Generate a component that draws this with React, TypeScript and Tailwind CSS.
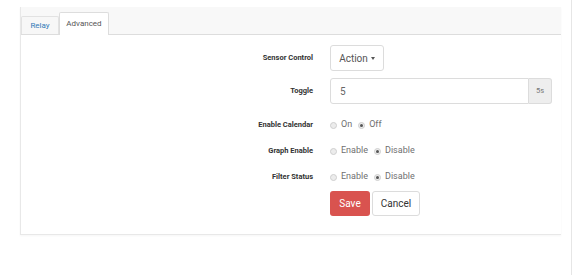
import React from "react";

function Radio({ checked }: { checked?: boolean }) {
  return (
    <span className="inline-flex items-center justify-center w-[7px] h-[7px] rounded-full border border-[#cfcfcf] bg-[#ececec]">
      {checked ? <span className="w-[3px] h-[3px] rounded-full bg-[#555]" /> : null}
    </span>
  );
}

function RadioPair({ a, b }: { a: string; b: string }) {
  return (
    <div className="flex items-center text-[9px] text-[#707070]">
      <Radio />
      <span className="ml-[4px]">{a}</span>
      <span className="ml-[6px] flex items-center"><Radio checked /></span>
      <span className="ml-[4px]">{b}</span>
    </div>
  );
}

function Label({ children }: { children: React.ReactNode }) {
  return (
    <div className="w-[292px] text-right text-[7.5px] font-bold text-[#333]">{children}</div>
  );
}

export default function App() {
  return (
    <div
      className="w-[572px] h-[275px] bg-white relative overflow-hidden"
      style={{ fontFamily: "Roboto, 'Liberation Sans', sans-serif" }}
    >
      <div className="absolute right-0 top-0 h-full w-[1px] bg-[#e6e6e6]" />
      <div className="ml-[20px] mt-[7px] w-[541px] h-[228px] border-l border-b border-[#e8e8e8] shadow-[0_1px_2px_rgba(0,0,0,0.04)]">
        <div className="h-[28px] bg-[#f8f8f8] border-b border-[#dddddd] flex items-end">
          <div className="w-[38px] h-[18px] border border-b-0 border-[#e2e2e2] bg-[#f7f7f7] flex items-center justify-center text-[8px] text-[#337ab7] rounded-t-[2px]">
            Relay
          </div>
          <div className="w-[50px] h-[23px] -mb-[1px] border border-b-0 border-[#dddddd] bg-white flex items-center justify-center text-[8px] text-[#555] rounded-t-[2px]">
            Advanced
          </div>
        </div>
        <div className="flex flex-col pt-[10px]">
          <div className="flex items-center h-[26px]">
            <Label>Sensor Control</Label>
            <div className="ml-[17px] h-[26px] w-[54px] border border-[#dcdcdc] rounded-[3px] flex items-center justify-center text-[10px] text-[#555]">
              Action
              <span className="ml-[3px] inline-block w-0 h-0 border-l-[2.5px] border-r-[2.5px] border-t-[3px] border-l-transparent border-r-transparent border-t-[#555]" />
            </div>
          </div>
          <div className="flex items-center h-[26px] mt-[7px]">
            <Label>Toggle</Label>
            <div className="ml-[17px] flex h-[26px]">
              <div className="w-[199px] h-full border border-[#dcdcdc] rounded-l-[3px] flex items-center pl-[9px] text-[10px] text-[#666]">
                5
              </div>
              <div className="w-[23px] h-full border border-l-0 border-[#dcdcdc] bg-[#eeeeee] rounded-r-[3px] flex items-center justify-center text-[7.5px] text-[#777]">
                5s
              </div>
            </div>
          </div>
          <div className="flex items-center h-[26px] mt-[8px]">
            <Label>Enable Calendar</Label>
            <div className="ml-[17px]"><RadioPair a="On" b="Off" /></div>
          </div>
          <div className="flex items-center h-[26px]">
            <Label>Graph Enable</Label>
            <div className="ml-[17px]"><RadioPair a="Enable" b="Disable" /></div>
          </div>
          <div className="flex items-center h-[26px]">
            <Label>Filter Status</Label>
            <div className="ml-[17px]"><RadioPair a="Enable" b="Disable" /></div>
          </div>
          <div className="flex items-center mt-[1px] ml-[309px]">
            <div className="w-[40px] h-[25px] bg-[#d9534f] rounded-[3px] flex items-center justify-center text-[10px] text-white">
              Save
            </div>
            <div className="ml-[2px] w-[48px] h-[25px] border border-[#dcdcdc] bg-white rounded-[3px] flex items-center justify-center text-[10px] text-[#333]">
              Cancel
            </div>
          </div>
        </div>
      </div>
    </div>
  );
}
